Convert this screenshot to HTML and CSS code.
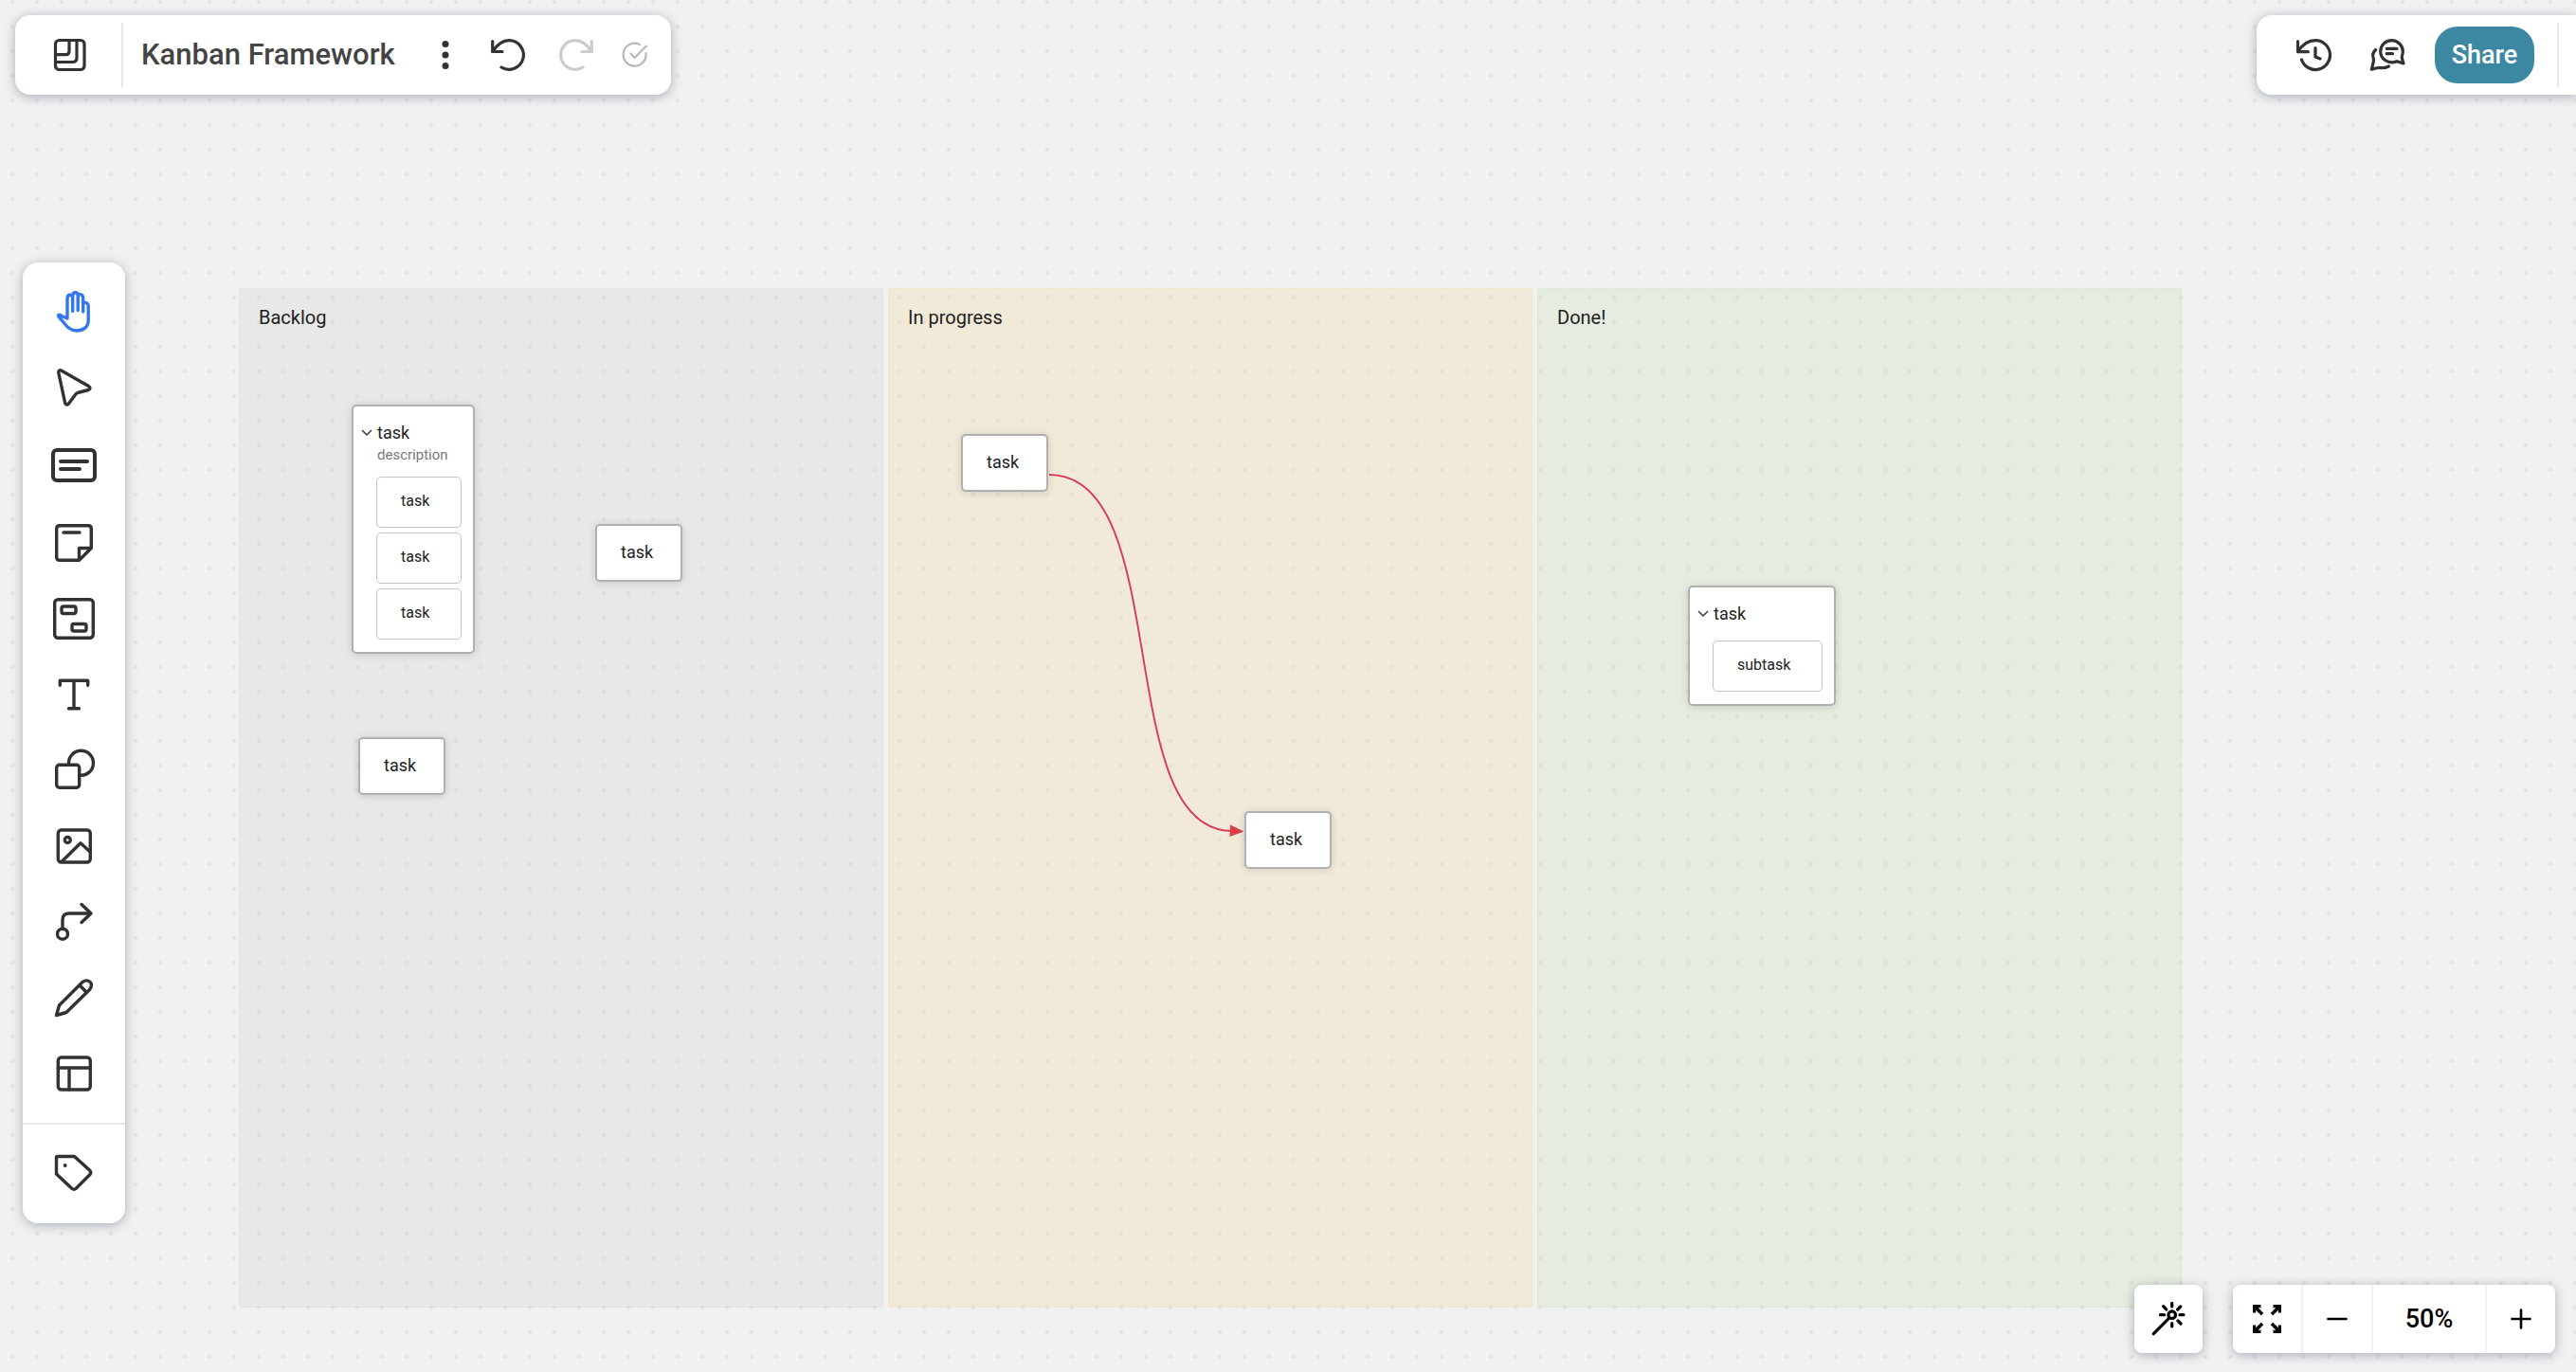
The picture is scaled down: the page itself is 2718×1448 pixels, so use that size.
FILE: index.html
```html
<!DOCTYPE html>
<html lang="en">
<head>
  <meta charset="utf-8">
  <title>Kanban Framework</title>
  <link rel="stylesheet" href="styles.css">
</head>
<body>
  <main class="canvas">
    <section class="column backlog">
      <h2>Backlog</h2>
      <article class="node group backlog_group">
        <button class="group_title" type="button">
          <svg class="chevron" viewBox="0 0 12 12"><path d="M1.5 3.5L6 8L10.5 3.5"/></svg>task
        </button>
        <p class="description">description</p>
        <ul class="subtasks">
          <li>task</li>
          <li>task</li>
          <li>task</li>
        </ul>
      </article>
      <article class="node task backlog_right">task</article>
      <article class="node task backlog_bottom">task</article>
    </section>
    <section class="column progress">
      <h2>In progress</h2>
      <svg class="link" viewBox="0 0 208 390">
        <path class="link_halo" d="M1 7C134 7 66 383 194 383"/>
        <path class="link_line" d="M1 7C134 7 66 383 194 383"/>
        <path class="link_head" d="M192 376.500L206.500 383.500L191.500 389Z"/>
      </svg>
      <article class="node task progress_from">task</article>
      <article class="node task progress_to">task</article>
    </section>
    <section class="column done">
      <h2>Done!</h2>
      <article class="node group done_group">
        <button class="group_title" type="button">
          <svg class="chevron" viewBox="0 0 12 12"><path d="M1.5 3.5L6 8L10.5 3.5"/></svg>task
        </button>
        <ul class="subtasks">
          <li>subtask</li>
        </ul>
      </article>
    </section>
  </main>

  <div class="shell">
    <header class="top">
      <div class="bar bar_left">
        <button class="btn btn_home" type="button" aria-label="Boards">
          <svg class="icon36" viewBox="0 0 36 36">
            <rect x="2.500" y="2.500" width="30.500" height="31" rx="4"/>
            <path d="M17 3V14Q17 17.700 13.500 17.700H3M25 3V21Q25 25.500 20.500 25.500H3"/>
          </svg>
        </button>
        <h1>Kanban Framework</h1>
        <button class="btn btn_more" type="button" aria-label="More">
          <svg class="icon36 filled" viewBox="0 0 36 36">
            <circle cx="18" cy="6.500" r="3.500"/><circle cx="18" cy="18" r="3.500"/><circle cx="18" cy="29.500" r="3.500"/>
          </svg>
        </button>
        <button class="btn btn_undo" type="button" aria-label="Undo">
          <svg class="icon36" viewBox="0 0 36 36">
            <path d="M1.700 3.500V14.500H12M1.700 14.500C6 8 12 2.700 19 2.700A15.300 15.300 0 1 1 11 31"/>
          </svg>
        </button>
        <button class="btn btn_redo" type="button" aria-label="Redo" disabled>
          <svg class="icon36" viewBox="0 0 36 36">
            <path d="M34.300 3.500V14.500H24M34.300 14.500C30 8 24 2.700 17 2.700A15.300 15.300 0 1 0 25 31"/>
          </svg>
        </button>
        <button class="btn btn_saved" type="button" aria-label="Saved" disabled>
          <svg class="icon28" viewBox="0 0 28 28">
            <path d="M19 3A12 12 0 1 0 25.500 12M9.500 12.500L13.500 17L26 4.500"/>
          </svg>
        </button>
      </div>
      <div class="bar bar_right">
        <button class="btn" type="button" aria-label="History">
          <svg class="icon38" viewBox="0 0 38 36">
            <path d="M2.500 3.700V14.700H13.300M2.500 14.700C7 7.500 13 2.700 21 2.700A15.400 15.400 0 1 1 6.500 23M21 10.700V20L26 22"/>
          </svg>
        </button>
        <button class="btn" type="button" aria-label="Comments">
          <svg class="icon38" viewBox="0 0 38 36">
            <path d="M29 24.700C20 28.500 11.500 22 11.700 14C12 7.500 17 2.600 23.500 2.600C30 2.600 35.300 8 35.300 14C35.500 18 33.500 19 34.500 22L36 27Z"/>
            <path d="M18.300 11.300H29M18.300 16.700H24.500"/>
            <path d="M6.700 12.500C3 16 3.500 20 4.300 22C5 25 3.500 28 2.300 33.300L8 31.700C12 30.500 13 33.500 20.500 30"/>
          </svg>
        </button>
        <button class="share" type="button">Share</button>
        <span class="divider"></span>
      </div>
    </header>

    <nav class="tools">
      <div class="tools_main">
        <button class="tool active" type="button" aria-label="Hand">
          <svg class="icon48" viewBox="0 0 48 48">
            <path d="M17 31V10.500C17 7.500 18.500 6.300 20 6.300C22 6.300 22.700 7.500 22.700 9.500V23.500M22.700 7.500C22.700 5 24 3.700 25.500 3.700C27 3.700 28.200 5 28.200 7V22.500M28.200 6.500C30.500 5 33.700 6 33.700 9.500V24M33.700 15C36.500 13.500 39.200 15 39.200 18V33C39.200 40 34 44 27 44C18 44 15.500 37.500 9 30.500C5.500 26.500 9 26.500 11 28.500L17 31"/>
          </svg>
        </button>
        <button class="tool" type="button" aria-label="Select">
          <svg class="icon48" viewBox="0 0 48 48">
            <path d="M11 6.200L39.500 22.500Q42.500 25 39.500 26.500L28 29.500Q26.500 30 25.500 31.500L18.500 41Q16 43.500 14.700 40.500L7.700 8Q8 4.800 11 6.200Z"/>
          </svg>
        </button>
        <button class="tool tool_card" type="button" aria-label="Card">
          <svg class="icon48 heavy" viewBox="0 0 48 48">
            <rect x="2" y="8" width="44" height="32" rx="4"/>
            <path d="M10 20H38M10 28H30"/>
          </svg>
        </button>
        <button class="tool" type="button" aria-label="Note">
          <svg class="icon48" viewBox="0 0 48 48">
            <path d="M29.500 42.300H9Q5.700 42.300 5.700 39V9Q5.700 5.700 9 5.700H39Q42.300 5.700 42.300 9V29.500L29.500 42.300V29.500H42.300M13 13H30"/>
          </svg>
        </button>
        <button class="tool" type="button" aria-label="Frame">
          <svg class="icon48" viewBox="0 0 48 48">
            <rect x="3.700" y="3.700" width="40.600" height="40.600" rx="3.500"/>
            <rect x="11" y="11" width="15" height="7.500" rx="2"/>
            <rect x="22" y="29.500" width="15" height="7.500" rx="2"/>
          </svg>
        </button>
        <button class="tool" type="button" aria-label="Text">
          <svg class="icon48" viewBox="0 0 48 48">
            <path d="M9.300 14.300V9.300H38.700V14.300M24 9.300V38.700M18.500 38.700H29.500"/>
          </svg>
        </button>
        <button class="tool" type="button" aria-label="Shapes">
          <svg class="icon48" viewBox="0 0 48 48">
            <rect x="5.700" y="18.300" width="24" height="24" rx="3"/>
            <path d="M18.600 18A13 13 0 1 1 30 29.200"/>
          </svg>
        </button>
        <button class="tool" type="button" aria-label="Image">
          <svg class="icon48" viewBox="0 0 48 48">
            <rect x="7.300" y="7" width="34" height="34" rx="3.500"/>
            <circle cx="17.300" cy="17.500" r="3"/>
            <path d="M11.500 40L31 20.700L41 30"/>
          </svg>
        </button>
        <button class="tool" type="button" aria-label="Connector">
          <svg class="icon48" viewBox="0 0 48 48">
            <circle cx="12" cy="36.700" r="5.500"/>
            <path d="M12 31V22Q12 15 19 15H42M32 5.500L42 15L32 24.500"/>
          </svg>
        </button>
        <button class="tool" type="button" aria-label="Draw">
          <svg class="icon48" viewBox="0 0 48 48">
            <path d="M5.500 42.500L8.500 32L33 7.500C36 5 39.500 5.500 41.300 7.700C43.500 10.500 42.500 13 40.500 15.500L16 39.500ZM30 10.700L37 18"/>
          </svg>
        </button>
        <button class="tool" type="button" aria-label="Templates">
          <svg class="icon48" viewBox="0 0 48 48">
            <rect x="7.300" y="7" width="34" height="34" rx="3.500"/>
            <path d="M7.300 18H41M19 18V41"/>
          </svg>
        </button>
      </div>
      <div class="tools_extra">
        <button class="tool" type="button" aria-label="Tags">
          <svg class="icon48" viewBox="0 0 48 48">
            <path d="M6.500 5.500H24.500L41 20.500Q42.500 22.500 41 24.500L26 39.500Q24 41 22 39.500L5.500 24V6.500Q5.500 5.500 6.500 5.500Z"/>
            <circle class="dot" cx="14.700" cy="15" r="2"/>
          </svg>
        </button>
      </div>
    </nav>

    <footer class="bottom">
      <div class="panel">
        <button class="panel_btn" type="button" aria-label="Magic">
          <svg class="icon36" viewBox="0 0 36 36">
            <circle cx="21.700" cy="13.700" r="3.800"/>
            <path d="M2.300 33.700L18.700 17M21.700 1.500V5M21.700 22.500V26M9.500 13.700H13.500M30 13.700H34M12.700 4.700L15.700 8M30.700 5L27.700 8M28 20L31 23"/>
          </svg>
        </button>
      </div>
      <div class="panel">
        <button class="panel_btn" type="button" aria-label="Fit to screen">
          <svg class="icon30" viewBox="0 0 30 30">
            <path d="M1.500 8.500V1.500H8.500M1.500 1.500L10 10M21.500 1.500H28.500V8.500M28.500 1.500L20 10M1.500 21.500V28.500H8.500M1.500 28.500L10 20M28.500 21.500V28.500H21.500M28.500 28.500L20 20"/>
          </svg>
        </button>
        <button class="panel_btn" type="button" aria-label="Zoom out">
          <svg class="icon24" viewBox="0 0 24 24"><path d="M2.500 12H21.500"/></svg>
        </button>
        <button class="panel_btn zoom" type="button">50%</button>
        <button class="panel_btn" type="button" aria-label="Zoom in">
          <svg class="icon24" viewBox="0 0 24 24"><path d="M2.500 12H21.500M12 2.500V21.500"/></svg>
        </button>
      </div>
    </footer>
  </div>
</body>
</html>
```
FILE: styles.css
```css
* {
  box-sizing: border-box;
}
body {
  margin: 0;
  height: 100vh;
  position: relative;
  overflow: hidden;
  background-color: #f1f1f1;
  background-image: radial-gradient(circle, #e2e2e2 1px, rgba(226, 226, 226, 0) 3px);
  background-size: 26px 26px;
  background-position: 0 15px;
  color: #222;
  font-family: Roboto, "Liberation Sans", sans-serif;
}
button {
  margin: 0;
  padding: 0;
  border: 0;
  background: none;
  color: inherit;
  font: inherit;
  cursor: pointer;
}
h1, h2, p, ul {
  margin: 0;
  padding: 0;
}
svg {
  display: block;
  flex: none;
  fill: none;
  stroke: currentColor;
  stroke-width: 3.4;
  stroke-linecap: round;
  stroke-linejoin: round;
}

/* canvas */
.canvas {
  position: absolute;
  left: 252px;
  top: 304px;
  display: flex;
  gap: 5px;
}
.column {
  position: relative;
  width: 680px;
  height: 1076px;
  padding: 18px 20px;
  border: 1px solid;
  border-radius: 3px;
}
.column h2 {
  font-size: 20px;
  line-height: 24px;
  font-weight: 400;
}
.backlog {
  background-color: rgba(190, 190, 190, 0.17);
  border-color: rgba(190, 190, 190, 0.15);
}
.progress {
  background-color: rgba(241, 220, 160, 0.3);
  border-color: rgba(250, 210, 130, 0.2);
}
.done {
  background-color: rgba(190, 220, 165, 0.22);
  border-color: rgba(190, 225, 160, 0.2);
}
.node {
  position: absolute;
  background: #fff;
  border: 2px solid #b0b0b2;
  border-radius: 5px;
  box-shadow: 0 1px 8px rgba(0, 0, 0, 0.15);
  font-size: 18px;
  line-height: 22px;
}
.task {
  width: 92px;
  padding: 17px 25px 18px;
}
.group {
  padding: 17px 12px 13px 8px;
}
.group_title {
  display: flex;
  align-items: center;
  gap: 5px;
}
.chevron {
  width: 12px;
  height: 12px;
  stroke-width: 1.7;
  stroke: #444;
}
.description {
  margin: 2px 0 13px 17px;
  color: #777;
  font-size: 15px;
  line-height: 20px;
}
.subtasks {
  display: flex;
  flex-direction: column;
  gap: 5px;
  margin-left: 16px;
  list-style: none;
}
.subtasks li {
  height: 54px;
  padding: 14px 25px;
  border: 1px solid #c4c4c4;
  border-radius: 5px;
  font-size: 16px;
}
.backlog_group {
  left: 118px;
  top: 122px;
  width: 130px;
}
.backlog_right {
  left: 375px;
  top: 248px;
}
.backlog_bottom {
  left: 125px;
  top: 473px;
}
.progress_from {
  left: 76px;
  top: 153px;
}
.progress_to {
  left: 375px;
  top: 551px;
}
.done_group {
  left: 158px;
  top: 313px;
  width: 156px;
}
.done_group .subtasks {
  margin-top: 17px;
}
.link {
  position: absolute;
  left: 168px;
  top: 189px;
  width: 208px;
  height: 390px;
  stroke-linecap: butt;
}
.link_halo {
  stroke: #f1eef0;
  stroke-width: 4;
}
.link_line {
  stroke: #df3d49;
  stroke-width: 2;
}
.link_head {
  fill: #df3d49;
  stroke: none;
}

/* toolbars */
.shell {
  position: relative;
  display: flex;
  flex-direction: column;
  align-items: flex-start;
  height: 100%;
  color: #323232;
  pointer-events: none;
}
.shell button {
  pointer-events: auto;
}
.bar, .tools, .panel {
  background: #fff;
  box-shadow: 0 2px 12px rgba(30, 45, 75, 0.35);
}
.top {
  display: flex;
  justify-content: space-between;
  align-self: stretch;
  padding: 16px 0 0 16px;
}
.bar {
  display: flex;
  align-items: center;
  height: 84px;
}
.bar_left {
  padding-right: 24px;
  border-radius: 16px;
}
.bar_right {
  gap: 40px;
  padding-left: 41px;
  border-radius: 16px 0 0 16px;
}
.bar h1 {
  width: 272px;
  color: #444;
  font-size: 31px;
  line-height: 36px;
  font-weight: 500;
  white-space: nowrap;
}
.btn_home {
  height: 68px;
  margin-right: 19px;
  padding: 0 36px 0 40px;
  border-right: 2px solid #e6e6e6;
}
.btn_more {
  margin-left: 31px;
}
.btn_undo {
  margin-left: 30px;
}
.btn_redo {
  margin-left: 36px;
  color: #ccc;
}
.btn_saved {
  margin-left: 30px;
  color: #b8b8b8;
}
.share {
  width: 105px;
  height: 60px;
  margin-left: -9px;
  border-radius: 24px;
  background: #3c87a1;
  color: #fff;
  font-size: 27px;
  font-weight: 500;
}
.divider {
  width: 2px;
  height: 68px;
  margin: 0 18px 0 -16px;
  background: #e6e6e6;
}
.icon24 {
  width: 24px;
  height: 24px;
  stroke-width: 2.6;
}
.icon28 {
  width: 28px;
  height: 28px;
  stroke-width: 2.2;
}
.icon30 {
  width: 30px;
  height: 30px;
  stroke-linecap: butt;
  stroke-linejoin: miter;
}
.icon36 {
  width: 36px;
  height: 36px;
  stroke-width: 3.2;
}
.icon38 {
  width: 38px;
  height: 36px;
  stroke-width: 3.2;
}
.icon48 {
  width: 48px;
  height: 48px;
}
.heavy {
  stroke-width: 4;
}
.filled, .dot {
  fill: currentColor;
  stroke: none;
}
.tools {
  width: 108px;
  margin: 177px 0 0 24px;
  border-radius: 16px;
}
.tools_main, .tools_extra {
  padding: 12px 0;
}
.tools_extra {
  border-top: 2px solid #e6e6e6;
}
.tool {
  display: flex;
  align-items: center;
  justify-content: center;
  width: 100%;
  height: 80px;
}
.tool_card {
  height: 84px;
}
.active {
  color: #3377ee;
}
.bottom {
  display: flex;
  align-self: flex-end;
  gap: 32px;
  margin-top: auto;
  padding: 0 22px 20px 0;
  color: #000;
}
.panel {
  display: flex;
  border-radius: 8px;
}
.panel_btn {
  display: flex;
  align-items: center;
  justify-content: center;
  width: 72px;
  height: 72px;
}
.panel_btn + .panel_btn {
  width: 74px;
  border-left: 2px solid #f0f0f0;
}
.panel .zoom {
  width: 120px;
  font-size: 27px;
  font-weight: 500;
}
```
